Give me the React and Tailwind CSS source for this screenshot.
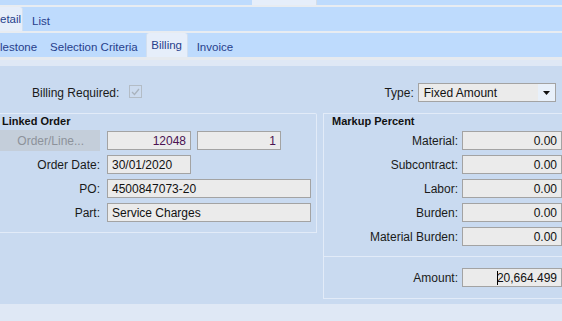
import React from "react";

const font = { fontFamily: '"Liberation Sans", Arial, sans-serif' };

function Field({ value, w, right, purple, caret }) {
  return (
    <div
      className={`h-[19px] border border-[#a3a3a3] bg-[#ebebeb] flex items-center px-[4px] text-[12px] leading-none ${
        right ? "justify-end" : "justify-start"
      } ${purple ? "text-[#4a1252]" : "text-[#111]"} ${w}`}
    >
      {caret && <span className="w-px h-[14px] bg-black mr-[-1px]" />}
      <span>{value}</span>
    </div>
  );
}

function MarkupRow({ label, value, caret }) {
  return (
    <div className="flex items-center h-[19px]">
      <div className="w-[134px] text-right text-[12px] leading-none text-[#1a1a1a]">{label}</div>
      <div className="ml-[4px]">
        <Field value={value} w="w-[100px]" right caret={caret} />
      </div>
    </div>
  );
}

export default function App() {
  return (
    <div className="w-[562px] h-[321px] overflow-hidden bg-[#dfe8f5]" style={font}>
      {/* top clipped tab strip */}
      <div className="flex h-[5px]">
        <div className="w-[252px] bg-[#bedbfd]" />
        <div className="w-[64px] bg-[#e6eefa]" />
        <div className="w-px bg-[#d4dde8]" />
        <div className="flex-1 bg-[#bedbfd]" />
      </div>
      <div className="h-[2px] bg-[#e8ecf1]" />

      {/* tab row 1 */}
      <div className="flex h-[24px] bg-[#bedbfd] text-[11.5px] text-[#27408c]">
        <div className="w-[23px] bg-[#e6eefa] border-r border-[#d3e0f0] rounded-tr-[3px] flex items-center pt-[1px]">
          etail
        </div>
        <div className="ml-[9px] flex items-center pt-[6px]">List</div>
      </div>
      <div className="h-[2px] bg-[#e8ecf1]" />

      {/* tab row 2 */}
      <div className="flex h-[24px] bg-[#bedbfd] text-[11.5px] text-[#27408c]">
        <div className="flex items-center pt-[5px]">lestone</div>
        <div className="ml-[13px] flex items-center pt-[5px]">Selection Criteria</div>
        <div className="ml-[8px] w-[42px] bg-[#e6eefa] border-l border-r border-[#d3e0f0] rounded-t-[3px] flex items-center justify-center pt-[1px]">
          Billing
        </div>
        <div className="ml-[9px] flex items-center pt-[5px]">Invoice</div>
      </div>
      <div className="h-[3px] bg-[#e6eaef]" />
      <div className="h-[6px] bg-[#dfe8f5]" />

      {/* main panel */}
      <div className="h-[238px] bg-[#c9daf0] pt-[17px] text-[#1a1a1a]">
        {/* billing required / type row */}
        <div className="flex items-center h-[19px]">
          <div className="ml-[32px] text-[12px] leading-none pt-[1px]">Billing Required:</div>
          <div className="ml-[10px] w-[13px] h-[13px] border border-[#b3bcc6] bg-[#ccdbef] flex items-center justify-center mb-[2px]">
            <svg width="9" height="8" viewBox="0 0 9 8">
              <path d="M1 4 L3.5 6.5 L8 1" fill="none" stroke="#a9b3be" strokeWidth="1.3" />
            </svg>
          </div>
          <div className="ml-[242px] text-[12px] leading-none">Type:</div>
          <div className="ml-[4px] w-[138px] h-[19px] border border-[#a3a3a3] bg-[#ebebeb] flex items-center">
            <span className="flex-1 pl-[5px] text-[12px] leading-none text-[#111]">Fixed Amount</span>
            <span className="w-[17px] h-full bg-[#e8f0fa] flex items-center justify-center">
              <svg width="7" height="4" viewBox="0 0 7 4">
                <path d="M0 0 H7 L3.5 4 Z" fill="#111" />
              </svg>
            </span>
          </div>
        </div>

        {/* group boxes */}
        <div className="flex mt-[11px] items-start">
          {/* Linked Order */}
          <div className="shrink-0 w-[317px] h-[120px] border-t border-r border-b border-[#e2ebf8] rounded-tr-[2px]">
            <div className="pl-[2px] pt-[1px] text-[11px] font-bold leading-[12px] text-[#111]">Linked Order</div>
            <div className="flex items-start mt-[3px]">
              <div className="w-[100px] h-[21px] bg-[#c4ceda] text-[12px] text-[#8d929a] flex items-center justify-end pr-[16px]">
                Order/Line...
              </div>
              <div className="ml-[7px] mt-[1px]">
                <Field value="12048" w="w-[84px]" right purple />
              </div>
              <div className="ml-[6px] mt-[1px]">
                <Field value="1" w="w-[84px]" right purple />
              </div>
            </div>
            <div className="flex items-center mt-[4px]">
              <div className="w-[100px] text-right text-[12px] leading-none">Order Date:</div>
              <div className="ml-[7px]">
                <Field value="30/01/2020" w="w-[84px]" />
              </div>
            </div>
            <div className="flex items-center mt-[5px]">
              <div className="w-[100px] text-right text-[12px] leading-none">PO:</div>
              <div className="ml-[7px]">
                <Field value="4500847073-20" w="w-[204px]" />
              </div>
            </div>
            <div className="flex items-center mt-[5px]">
              <div className="w-[100px] text-right text-[12px] leading-none">Part:</div>
              <div className="ml-[7px]">
                <Field value="Service Charges" w="w-[204px]" />
              </div>
            </div>
          </div>

          {/* Markup Percent */}
          <div className="shrink-0 ml-[6px] w-[245px] h-[186px] border-t border-l border-b border-[#e2ebf8]">
            <div className="pl-[8px] pt-[1px] text-[11px] font-bold leading-[12px] text-[#111]">Markup Percent</div>
            <div className="mt-[4px] flex flex-col gap-[5px]">
              <MarkupRow label="Material:" value="0.00" />
              <MarkupRow label="Subcontract:" value="0.00" />
              <MarkupRow label="Labor:" value="0.00" />
              <MarkupRow label="Burden:" value="0.00" />
              <MarkupRow label="Material Burden:" value="0.00" />
            </div>
            <div className="mt-[10px] border-t border-[#e2ebf8]" />
            <div className="mt-[11px]">
              <MarkupRow label="Amount:" value="20,664.499" caret />
            </div>
          </div>
        </div>
      </div>
    </div>
  );
}
